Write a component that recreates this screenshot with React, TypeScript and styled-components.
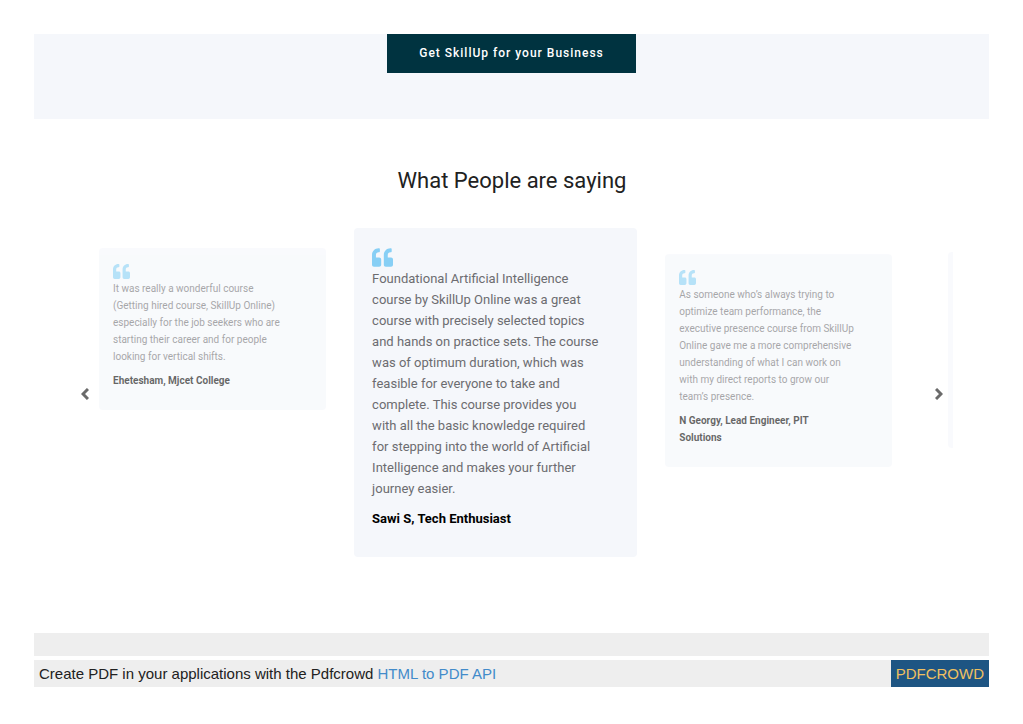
import React from "react";
import styled, { createGlobalStyle, css } from "styled-components";
import { FaQuoteLeft } from "react-icons/fa";

const GlobalStyle = createGlobalStyle`
  *, *::before, *::after { box-sizing: border-box; }
  body {
    margin: 0;
    background: #fff;
    color: #212529;
    font-family: Roboto, "Liberation Sans", sans-serif;
  }
  h2, p, blockquote, figure { margin: 0; }
`;

const Page = styled.div`
  padding: 34px;
`;

const Banner = styled.section`
  display: flex;
  justify-content: center;
  padding-bottom: 46px;
  background: #f5f7fb;
`;

const BannerButton = styled.button`
  padding: 0 32px;
  border: 0;
  background: #003340;
  color: #fff;
  font: 500 12px/39px Roboto, "Liberation Sans", sans-serif;
  letter-spacing: 1px;
  cursor: pointer;
`;

const Testimonials = styled.section`
  padding: 45px 36px 76px 37px;
`;

const Heading = styled.h2`
  margin-bottom: 30px;
  color: #212121;
  font-size: 22px;
  font-weight: 400;
  line-height: 34px;
  text-align: center;
`;

const Carousel = styled.div`
  position: relative;
`;

const Track = styled.div`
  display: flex;
  align-items: flex-start;
  overflow: hidden;
`;

const Card = styled.figure<{ $active?: boolean }>`
  border-radius: 4px;
  background: #f5f7fb;
  ${({ $active }) =>
    $active
      ? css`
          padding: 19px 36px 28px 18px;
          font-size: 13px;
          line-height: 21px;
        `
      : css`
          padding: 15px 36px 21px 14px;
          font-size: 10px;
          line-height: 17px;
          opacity: 0.6;
        `}
`;

const Slide = styled.div<{ $top: number; $active?: boolean }>`
  flex: 0 0 32.1%;
  padding: ${({ $top, $active }) => ($active ? "0" : `${$top}px 28px 0`)};
`;

const QuoteMark = styled(FaQuoteLeft)<{ $active?: boolean }>`
  display: block;
  width: ${({ $active }) => ($active ? 21 : 17)}px;
  height: ${({ $active }) => ($active ? 21 : 17)}px;
  color: #87cff5;
`;

const Quote = styled.blockquote`
  color: #6c6c70;
`;

const Author = styled.figcaption<{ $active?: boolean }>`
  margin-top: ${({ $active }) => ($active ? 9 : 7)}px;
  padding-right: 12px;
  color: #000;
  font-weight: 700;
`;

const Arrow = styled.button<{ $side: "left" | "right" }>`
  position: absolute;
  top: 50%;
  ${({ $side }) => $side}: 8px;
  display: flex;
  padding: 2px 2px 0;
  border: 0;
  background: none;
  color: #6a6a6a;
  transform: translateY(-50%);
  cursor: pointer;
`;

const GreyBar = styled.div`
  height: 23px;
  margin-bottom: 4px;
  background: #eee;
`;

const Footer = styled.footer`
  display: flex;
  align-items: center;
  justify-content: space-between;
  background: #eee;
  color: #212121;
  font: 15px/27px "Liberation Sans", sans-serif;
`;

const FooterText = styled.p`
  padding-left: 5px;
`;

const ApiLink = styled.a`
  color: #428bca;
  text-decoration: none;
`;

const BrandLink = styled.a`
  padding: 0 5px;
  background: #1e5583;
  color: #f0c060;
  text-decoration: none;
`;

interface Testimonial {
  text: string;
  author: string;
  top: number;
  active?: boolean;
}

const testimonials: Testimonial[] = [
  {
    text: "It was really a wonderful course (Getting hired course, SkillUp Online) especially for the job seekers who are starting their career and for people looking for vertical shifts.",
    author: "Ehetesham, Mjcet College",
    top: 20,
  },
  {
    text: "Foundational Artificial Intelligence course by SkillUp Online was a great course with precisely selected topics and hands on practice sets. The course was of optimum duration, which was feasible for everyone to take and complete. This course provides you with all the basic knowledge required for stepping into the world of Artificial Intelligence and makes your further journey easier.",
    author: "Sawi S, Tech Enthusiast",
    top: 0,
    active: true,
  },
  {
    text: "As someone who’s always trying to optimize team performance, the executive presence course from SkillUp Online gave me a more comprehensive understanding of what I can work on with my direct reports to grow our team’s presence.",
    author: "N Georgy, Lead Engineer, PIT Solutions",
    top: 26,
  },
];

const NextCard = styled(Card)`
  height: 196px;
`;

const Chevron = ({ points }: { points: string }) => (
  <svg width="8" height="12" viewBox="0 0 8 12" fill="none" stroke="currentColor" strokeWidth="3" aria-hidden="true">
    <polyline points={points} />
  </svg>
);

export default function App() {
  return (
    <>
      <GlobalStyle />
      <Page>
        <Banner>
          <BannerButton type="button">Get SkillUp for your Business</BannerButton>
        </Banner>
        <Testimonials>
          <Heading>What People are saying</Heading>
          <Carousel>
            <Track>
              {testimonials.map(({ text, author, top, active }) => (
                <Slide key={author} $top={top} $active={active}>
                  <Card $active={active}>
                    <QuoteMark $active={active} aria-hidden="true" />
                    <Quote>{text}</Quote>
                    <Author $active={active}>{author}</Author>
                  </Card>
                </Slide>
              ))}
              <Slide $top={24} aria-hidden="true">
                <NextCard />
              </Slide>
            </Track>
            <Arrow type="button" $side="left" aria-label="Previous">
              <Chevron points="7,1 2,6 7,11" />
            </Arrow>
            <Arrow type="button" $side="right" aria-label="Next">
              <Chevron points="1,1 6,6 1,11" />
            </Arrow>
          </Carousel>
        </Testimonials>
        <GreyBar />
        <Footer>
          <FooterText>
            Create PDF in your applications with the Pdfcrowd <ApiLink href="#api">HTML to PDF API</ApiLink>
          </FooterText>
          <BrandLink href="#pdfcrowd">PDFCROWD</BrandLink>
        </Footer>
      </Page>
    </>
  );
}
